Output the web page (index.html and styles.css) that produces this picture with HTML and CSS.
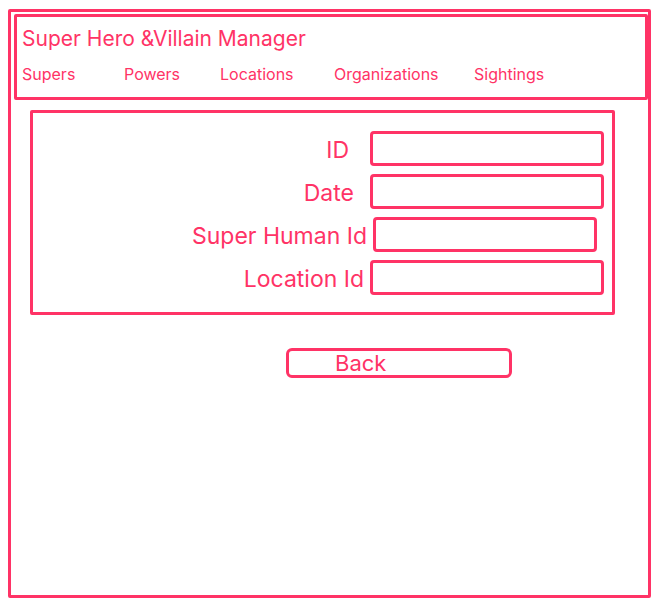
FILE: index.html
```html
<!DOCTYPE html>
<html>
<head>
<meta charset="utf-8">
<link rel="stylesheet" href="styles.css">
</head>
<body>
<div class="frame">
  <header class="header">
    <div class="title">Super Hero &amp;Villain Manager</div>
    <nav class="nav">
      <span class="nav-item">Supers</span>
      <span class="nav-item">Powers</span>
      <span class="nav-item">Locations</span>
      <span class="nav-item">Organizations</span>
      <span class="nav-item">Sightings</span>
    </nav>
  </header>
  <section class="form">
    <div class="row">
      <label class="label l-id">ID</label>
      <div class="input"></div>
    </div>
    <div class="row">
      <label class="label l-date">Date</label>
      <div class="input"></div>
    </div>
    <div class="row">
      <label class="label l-sh">Super Human Id</label>
      <div class="input i-sh"></div>
    </div>
    <div class="row">
      <label class="label l-loc">Location Id</label>
      <div class="input"></div>
    </div>
  </section>
  <div class="button">Back</div>
</div>
</body>
</html>
```

FILE: styles.css
```css
* { box-sizing: border-box; }
html, body { margin: 0; padding: 0; background: #ffffff; }
body {
  font-family: Inter, "Noto Sans", sans-serif;
  color: #ff3366;
}
.frame {
  width: 643px;
  height: 589px;
  margin: 9px 0 0 8px;
  border: 3px solid #ff3366;
  border-radius: 2px;
  display: flex;
  flex-direction: column;
  align-items: flex-start;
}
.header {
  margin: 2px 0 0 3px;
  width: 634px;
  height: 86px;
  border: 3px solid #ff3366;
  border-radius: 2px;
  padding: 8px 0 0 5px;
}
.title {
  font-size: 21px;
  line-height: 27px;
  height: 27px;
}
.nav {
  margin-top: 12px;
  display: grid;
  grid-template-columns: 102px 96px 114px 140px auto;
  font-size: 16px;
  line-height: 20px;
}
.form {
  margin: 10px 0 0 19px;
  width: 585px;
  height: 205px;
  border: 3px solid #ff3366;
  border-radius: 2px;
  padding: 18px 0 0 0;
  display: flex;
  flex-direction: column;
  gap: 8px;
}
.row {
  display: flex;
  align-items: center;
  height: 35px;
}
.label {
  width: 334px;
  text-align: right;
  font-size: 23px;
  line-height: 28px;
  padding-top: 3px;
}
.l-id { padding-right: 18px; }
.l-date { padding-right: 13px; }
.l-sh { padding-right: 0; }
.l-loc { padding-right: 3px; }
.input {
  margin-left: 3px;
  width: 234px;
  height: 35px;
  border: 3px solid #ff3366;
  border-radius: 4px;
}
.i-sh {
  margin-left: 6px;
  width: 224px;
}
.button {
  margin: 33px 0 0 275px;
  width: 226px;
  height: 30px;
  border: 3px solid #ff3366;
  border-radius: 6px;
  padding-left: 46px;
  font-size: 22px;
  line-height: 25px;
}
```
